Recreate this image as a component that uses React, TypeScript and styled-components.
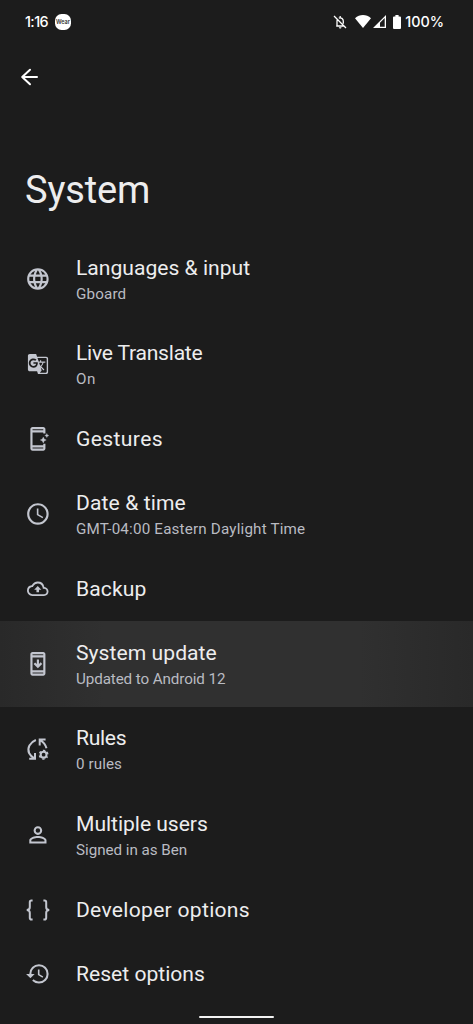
import React from 'react';
import styled, { createGlobalStyle } from 'styled-components';
import { MdLanguage, MdGTranslate, MdAccessTime, MdOutlineBackup, MdPersonOutline, MdHistory } from 'react-icons/md';

const GlobalStyle = createGlobalStyle`
  body { margin: 0; background: #1c1c1c; }
  * { box-sizing: border-box; }
`;

const Screen = styled.main`
  display: flex;
  flex-direction: column;
  height: 1024px;
  overflow: hidden;
  background: #1c1c1c;
  color: #ededee;
  font-family: Roboto, sans-serif;
`;

const StatusBar = styled.div`
  display: flex;
  align-items: center;
  justify-content: space-between;
  height: 43px;
  padding: 0 29px 0 25px;
  color: #fff;
  font-family: Inter, sans-serif;
`;

const StatusGroup = styled.div`
  display: flex;
  align-items: center;
`;

const StatusText = styled.span<{ $spacing: number }>`
  font-size: 14.4px;
  font-weight: 500;
  line-height: 20px;
  letter-spacing: ${p => p.$spacing}px;
`;

const WearBadge = styled.span`
  display: flex;
  align-items: center;
  justify-content: center;
  width: 16px;
  height: 16px;
  margin-left: 7px;
  border-radius: 6.5px;
  background: #fff;
  color: #333;
  font-size: 5.5px;
  font-weight: 600;
  line-height: 8px;
`;

const StatusIcon = styled.svg<{ $gap: number }>`
  display: block;
  margin-right: ${p => p.$gap}px;
`;

const Toolbar = styled.div`
  display: flex;
  align-items: center;
  height: 68px;
  padding-left: 18px;
`;

const BackButton = styled.button`
  display: flex;
  padding: 0;
  border: 0;
  background: none;
  color: #fff;
`;

const Heading = styled.h1`
  height: 125.1px;
  margin: 0;
  padding: 54px 0 0 25px;
  font-size: 38px;
  font-weight: 400;
  line-height: 50px;
  letter-spacing: -0.15px;
`;

const List = styled.ul`
  display: flex;
  flex-direction: column;
  margin: 0;
  padding: 0;
  list-style: none;
`;

const Row = styled.li<{ $tall: boolean; $pressed?: boolean }>`
  display: flex;
  align-items: center;
  flex: none;
  height: ${p => (p.$tall ? 85.6 : 64.1)}px;
  background: ${p => (p.$pressed ? 'linear-gradient(90deg, #292929 0%, #303030 22%, #303030 76%, #292929 100%)' : 'none')};
`;

const IconSlot = styled.span`
  display: flex;
  justify-content: center;
  flex: none;
  width: 76px;
  color: #c3c6cf;
`;

const Labels = styled.div`
  display: flex;
  flex-direction: column;
  gap: 2px;
`;

const Title = styled.span<{ $spacing: number }>`
  font-size: 21.1px;
  line-height: 28px;
  letter-spacing: ${p => p.$spacing}px;
  white-space: nowrap;
`;

const Summary = styled.span<{ $spacing: number }>`
  color: #b9bbc2;
  font-size: 15.2px;
  line-height: 20px;
  letter-spacing: ${p => p.$spacing}px;
  white-space: nowrap;
`;

const HomeBar = styled.div`
  position: absolute;
  top: 1015.5px;
  left: 199px;
  width: 75px;
  height: 2px;
  border-radius: 1px;
  background: #f2f2f2;
`;

const GesturesIcon = () => (
  <svg width="25.8" height="25.8" viewBox="0 0 24 24" fill="currentColor">
    <path d="M7 1h10c1.1 0 2 .9 2 2v4h-2V6H7v12h10v-1.5h2V21c0 1.1-.9 2-2 2H7c-1.1 0-2-.9-2-2V3c0-1.1.9-2 2-2zm0 2v1h10V3zm0 17v1h10v-1z" fillRule="evenodd" />
    <path d="M17 10.2l.9 1.9 1.9.9-1.9.9-.9 1.9-.9-1.9-1.9-.9 1.9-.9zM20.3 7l.6 1.3 1.3.6-1.3.6-.6 1.3-.6-1.3-1.3-.6 1.3-.6z" stroke="currentColor" strokeWidth=".3" />
  </svg>
);

const UpdateIcon = () => (
  <svg width="25.8" height="25.8" viewBox="0 0 24 24" fill="currentColor">
    <path d="M7 1h10c1.1 0 2 .9 2 2v18c0 1.1-.9 2-2 2H7c-1.1 0-2-.9-2-2V3c0-1.1.9-2 2-2zm0 2v1h10V3zm0 3v12h10V6zm0 14v1h10v-1z" fillRule="evenodd" />
    <path d="M16 12l-4 4-4-4 1.41-1.41L11 12.17V8h2v4.17l1.59-1.59z" />
  </svg>
);

const RulesIcon = () => (
  <svg width="26" height="26" viewBox="0.4 0 26 26" fill="none" stroke="currentColor" strokeWidth="2">
    <path d="M11.3 4C5.6 6.2 2 12.2 4.6 17.2Q6 20 9.4 22M4.6 22.7h5.8v-5.8M21 3.5h-5.9v5.9M15.6 4.1c3.3 2 5.4 4.7 6.3 8.1" />
    <circle cx="19" cy="18.7" r="2.9" strokeWidth="2" />
    <circle cx="19" cy="18.7" r="4.2" strokeWidth="1.5" strokeDasharray="2.2 2.198" strokeDashoffset="1.1" transform="rotate(30 19 18.7)" />
  </svg>
);

const BracesIcon = () => (
  <svg width="26" height="26" viewBox="0 0 26 26" fill="none" stroke="currentColor" strokeWidth="2">
    <path d="M7.6 3.4H6.4Q4.8 3.4 4.8 5.2V10.2Q4.8 13 1.7 13Q4.8 13 4.8 15.8V20.8Q4.8 22.6 6.4 22.6H7.6M18.4 3.4h1.2Q21.2 3.4 21.2 5.2V10.2Q21.2 13 24.3 13Q21.2 13 21.2 15.8V20.8Q21.2 22.6 19.6 22.6h-1.2" />
  </svg>
);

interface Item {
  icon: React.ReactNode;
  title: string;
  spacing: number;
  summary?: string;
  summarySpacing?: number;
  pressed?: boolean;
}

const items: Item[] = [
  { icon: <MdLanguage size={25.8} />, title: 'Languages & input', spacing: 0, summary: 'Gboard', summarySpacing: 0.15 },
  { icon: <MdGTranslate size={22} />, title: 'Live Translate', spacing: -0.24, summary: 'On', summarySpacing: 0.6 },
  { icon: <GesturesIcon />, title: 'Gestures', spacing: 0.38 },
  { icon: <MdAccessTime size={25.8} />, title: 'Date & time', spacing: 0.11, summary: 'GMT-04:00 Eastern Daylight Time', summarySpacing: 0.18 },
  { icon: <MdOutlineBackup size={21.5} />, title: 'Backup', spacing: 0.1 },
  { icon: <UpdateIcon />, title: 'System update', spacing: 0.05, summary: 'Updated to Android 12', summarySpacing: -0.1, pressed: true },
  { icon: <RulesIcon />, title: 'Rules', spacing: -0.3, summary: '0 rules', summarySpacing: 0.08 },
  { icon: <MdPersonOutline size={25.8} />, title: 'Multiple users', spacing: -0.04, summary: 'Signed in as Ben', summarySpacing: -0.03 },
  { icon: <BracesIcon />, title: 'Developer options', spacing: 0.28 },
  { icon: <MdHistory size={25.8} />, title: 'Reset options', spacing: 0 },
];

export default function App() {
  return (
    <Screen>
      <GlobalStyle />
      <StatusBar>
        <StatusGroup>
          <StatusText $spacing={-0.6}>1:16</StatusText>
          <WearBadge>Wear</WearBadge>
        </StatusGroup>
        <StatusGroup>
          <StatusIcon $gap={8} width="14" height="14" viewBox="0 0 14 14" fill="none" stroke="#fff" strokeWidth="1.3">
            <path d="M1 1l12 12M3.2 11h7.8M4 10.8V6.2c0-.8.2-1.5.6-2M5.8 3.1c2.4-.9 4.5.7 4.5 3v2.6M7.2 1v1.6" />
            <path d="M5.9 12.2h2.6c0 1.8-2.6 1.8-2.6 0z" fill="#fff" stroke="none" />
          </StatusIcon>
          <StatusIcon $gap={1.5} width="16" height="13" viewBox="0 0 16 13" fill="#fff">
            <path d="M8 13L0 3.2C4.6-1 11.4-1 16 3.2z" />
          </StatusIcon>
          <StatusIcon $gap={7.5} width="13" height="13" viewBox="0 0 13 13" fill="#fff">
            <path d="M13 0v13H0zM11.7 3.1L7 7.8v3.9h4.7z" fillRule="evenodd" />
          </StatusIcon>
          <StatusIcon $gap={4} width="8" height="14" viewBox="0 0 8 14" fill="#fff">
            <path d="M2.4 0h3.2v1.4H7q1 0 1 1V13q0 1-1 1H1q-1 0-1-1V2.4q0-1 1-1h1.4z" />
          </StatusIcon>
          <StatusText $spacing={-0.03}>100%</StatusText>
        </StatusGroup>
      </StatusBar>
      <Toolbar>
        <BackButton aria-label="Back">
          <svg width="24" height="24" viewBox="0 0 24 24" fill="none" stroke="currentColor" strokeWidth="2" strokeLinecap="round" strokeLinejoin="round">
            <path d="M19 12H4.5M12 4.7L4.2 12l7.8 7.3" />
          </svg>
        </BackButton>
      </Toolbar>
      <Heading>System</Heading>
      <List>
        {items.map(item => (
          <Row key={item.title} $tall={!!item.summary} $pressed={item.pressed}>
            <IconSlot>{item.icon}</IconSlot>
            <Labels>
              <Title $spacing={item.spacing}>{item.title}</Title>
              {item.summary && <Summary $spacing={item.summarySpacing ?? 0}>{item.summary}</Summary>}
            </Labels>
          </Row>
        ))}
      </List>
      <HomeBar />
    </Screen>
  );
}
